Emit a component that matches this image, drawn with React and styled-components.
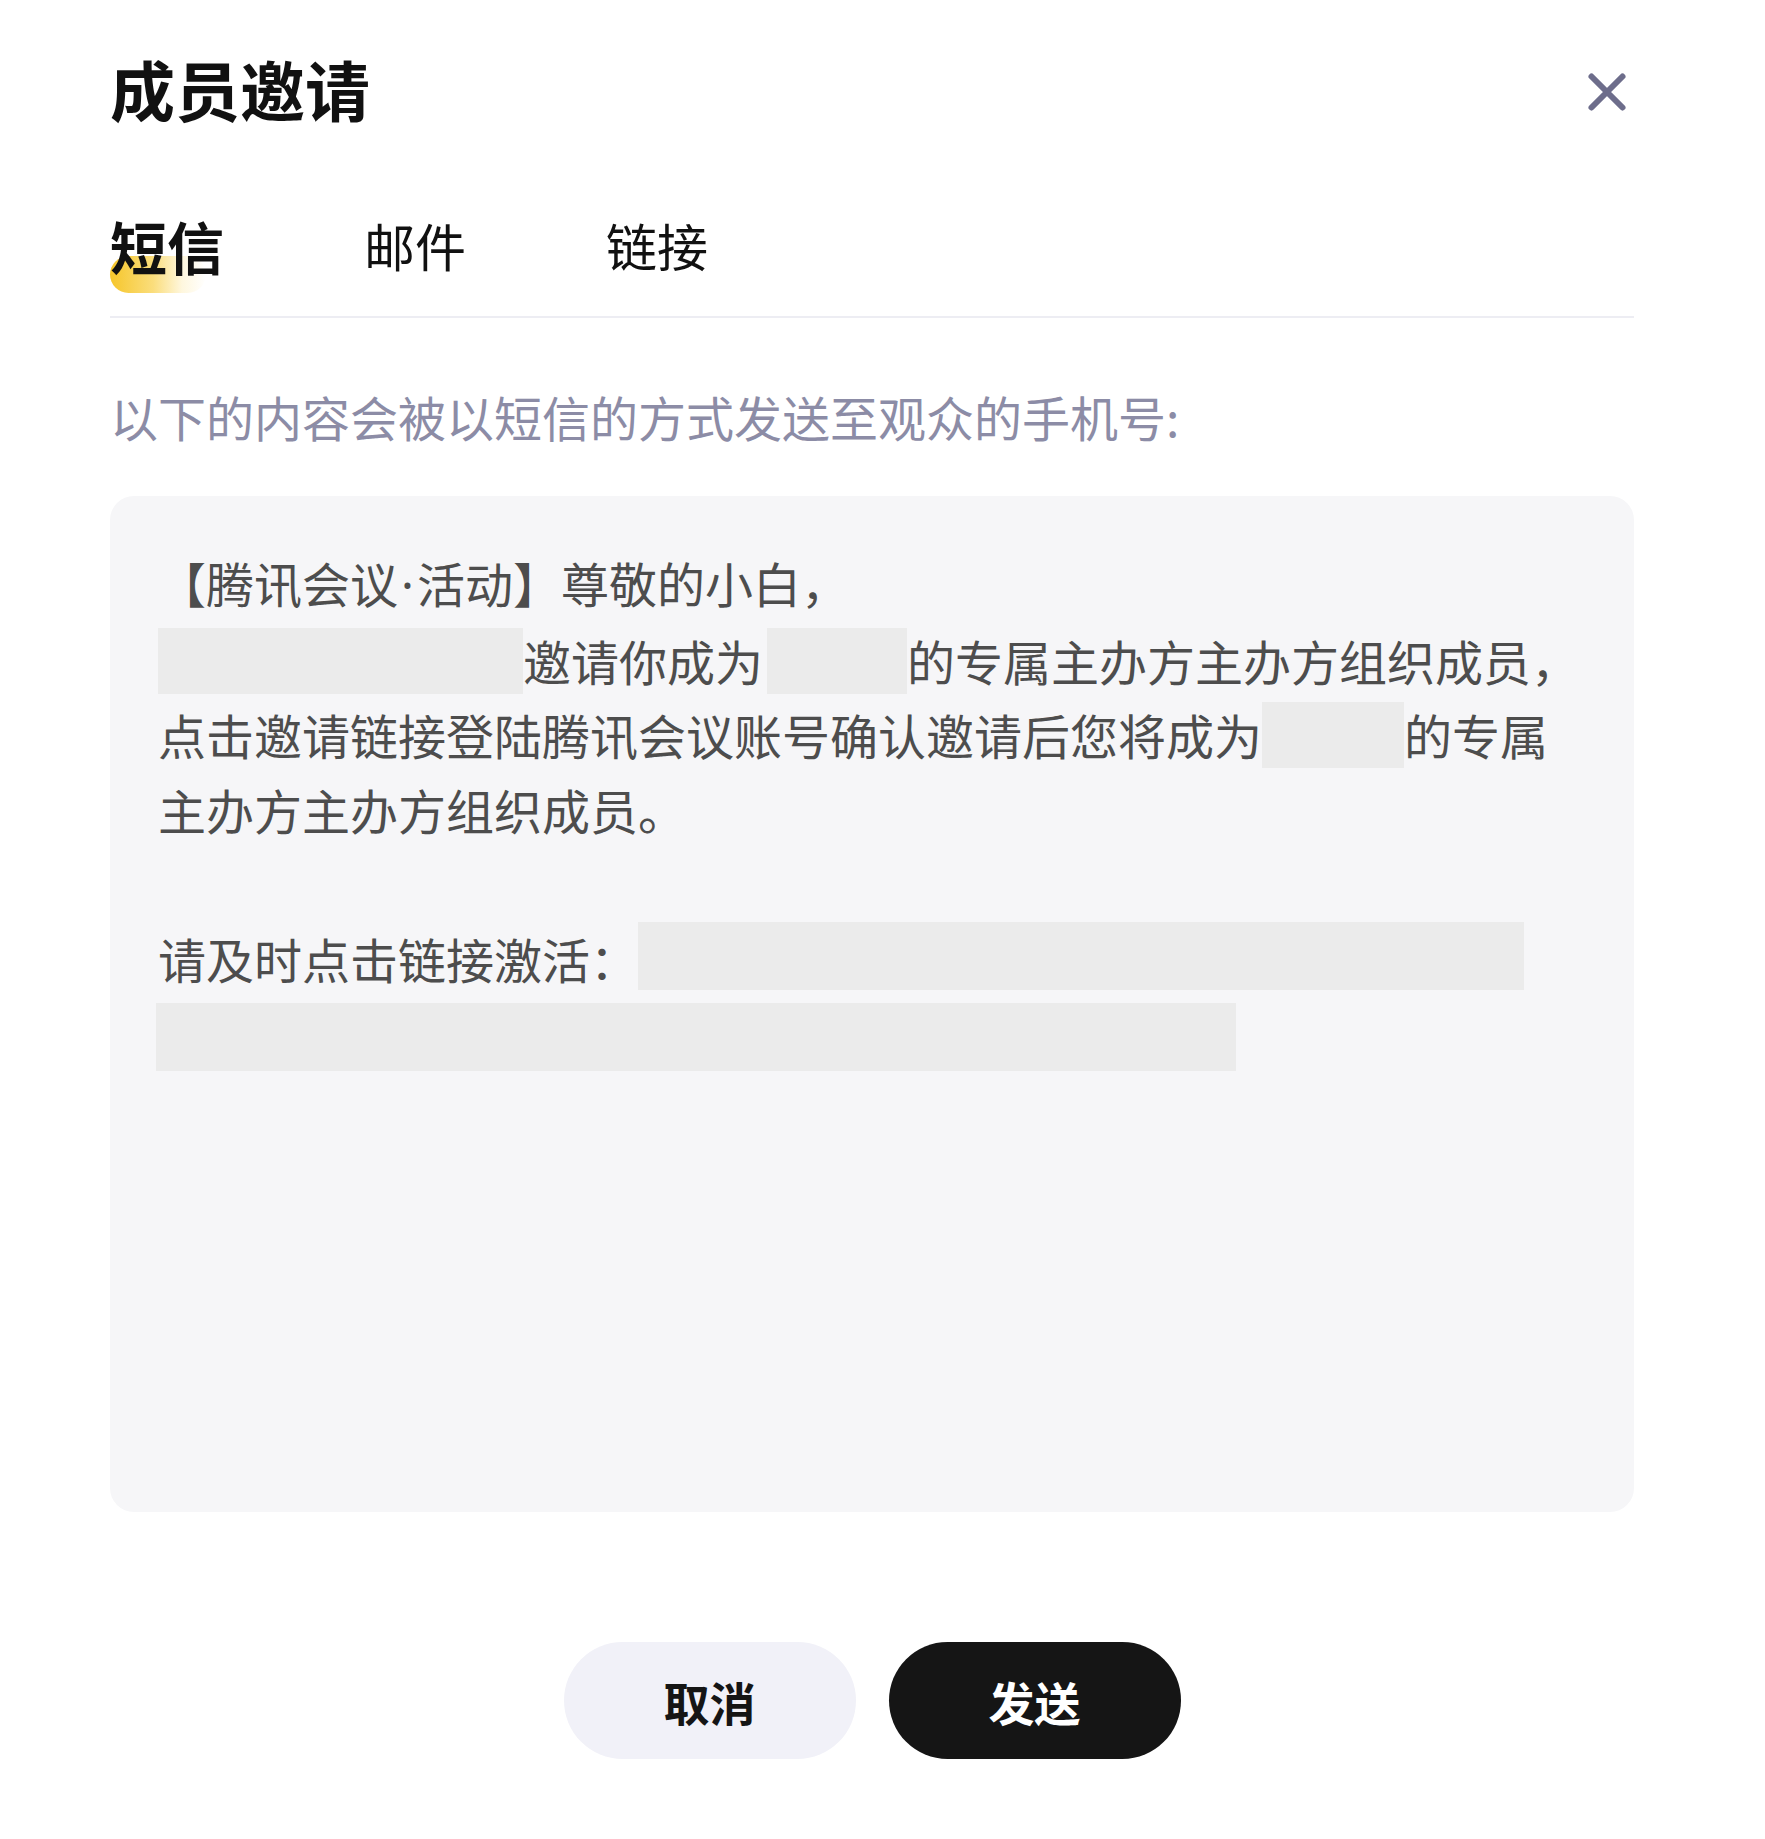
import React from "react";
import styled, { createGlobalStyle } from "styled-components";

const GlobalStyle = createGlobalStyle`
  html, body {
    margin: 0;
    padding: 0;
    background: #ffffff;
  }
  body {
    font-family: "Noto Sans CJK SC", "Noto Sans", sans-serif;
    -webkit-font-smoothing: antialiased;
  }
  * { box-sizing: border-box; }
`;

const Page = styled.div`
  width: 1765px;
  height: 1839px;
  padding: 0 131px 0 110px;
  display: flex;
  flex-direction: column;
`;

const Header = styled.div`
  display: flex;
  align-items: center;
  justify-content: space-between;
  padding-top: 46px;
  height: 134px;
`;

const Title = styled.h1`
  margin: 0 0 4px;
  font-size: 65px;
  line-height: 84px;
  font-weight: 700;
  color: #111111;
`;

const CloseButton = styled.button`
  width: 40px;
  height: 40px;
  padding: 0;
  margin: 4px 7px 0 0;
  border: none;
  background: transparent;
  display: flex;
  align-items: center;
  justify-content: center;
  cursor: pointer;
`;

const TabBar = styled.div`
  display: flex;
  align-items: flex-end;
  gap: 140px;
  margin-top: 76px;
  padding-bottom: 36px;
  border-bottom: 2px solid #ededf3;
`;

const Tab = styled.div`
  position: relative;
  height: 70px;
  line-height: 70px;
  font-size: ${(p) => (p.$active ? "57px" : "51px")};
  font-weight: ${(p) => (p.$active ? 700 : 400)};
  color: #111111;
  z-index: 0;

  &::after {
    content: "";
    display: ${(p) => (p.$active ? "block" : "none")};
    position: absolute;
    left: 0;
    top: 46px;
    width: 96px;
    height: 37px;
    border-radius: 19px;
    background: linear-gradient(
      90deg,
      #f6c62a 0%,
      rgba(249, 210, 80, 0.75) 45%,
      rgba(253, 232, 160, 0.35) 75%,
      rgba(255, 245, 210, 0) 100%
    );
    z-index: -1;
  }
`;

const Description = styled.p`
  margin: 66px 0 0;
  font-size: 48px;
  line-height: 64px;
  color: #8c8ca6;
  font-weight: 400;
`;

const MessageBox = styled.div`
  margin-top: 48px;
  height: 1016px;
  border-radius: 24px;
  background: #f6f6f8;
  padding: 49px 48px;
`;

const MessageText = styled.div`
  font-size: 48px;
  line-height: 74.5px;
  color: #4d4d4d;
  font-weight: 400;
  word-break: break-all;
`;

const Dot = styled.span`
  font-family: "Noto Sans", "DejaVu Sans", sans-serif;
  margin: 0 3px;
`;

const Masked = styled.span`
  display: inline-block;
  vertical-align: top;
  margin-top: ${(p) => p.$mt ?? 5}px;
  height: ${(p) => p.$h || 66}px;
  width: ${(p) => p.$w}px;
  margin-left: ${(p) => p.$ml || 0}px;
  margin-right: ${(p) => p.$mr || 0}px;
  background: #ebebeb;
`;

const Footer = styled.div`
  margin-top: 130px;
  display: flex;
  justify-content: center;
  gap: 33px;
`;

const Button = styled.button`
  width: 292px;
  height: 117px;
  border: none;
  border-radius: 59px;
  font-family: inherit;
  font-size: 46px;
  font-weight: 700;
  background: ${(p) => (p.$primary ? "#151515" : "#f1f1f8")};
  color: ${(p) => (p.$primary ? "#ffffff" : "#151515")};
  cursor: pointer;
`;

export default function App() {
  return (
    <>
      <GlobalStyle />
      <Page>
        <Header>
          <Title>成员邀请</Title>
          <CloseButton aria-label="关闭">
            <svg width="40" height="40" viewBox="0 0 40 40">
              <path
                d="M4.5 4.5 L35.5 35.5 M35.5 4.5 L4.5 35.5"
                stroke="#6d6d8b"
                strokeWidth="6"
                strokeLinecap="round"
                fill="none"
              />
            </svg>
          </CloseButton>
        </Header>

        <TabBar>
          <Tab $active>短信</Tab>
          <Tab>邮件</Tab>
          <Tab>链接</Tab>
        </TabBar>

        <Description>以下的内容会被以短信的方式发送至观众的手机号:</Description>

        <MessageBox>
          <MessageText>
            【腾讯会议<Dot>·</Dot>活动】尊敬的小白，
            <br />
            <Masked $w={365} />邀请你成为<Masked $w={140} $ml={4} />的专属主办方主办方组织成员，
            <br />
            点击邀请链接登陆腾讯会议账号确认邀请后您将成为<Masked $w={142} />的专属
            <br />
            主办方主办方组织成员。
            <br />
            <br />
            请及时点击链接激活：<Masked $w={886} $h={68} $mt={1} />
            <br />
            <Masked $w={1080} $h={68} $ml={-2} $mt={8} />
          </MessageText>
        </MessageBox>

        <Footer>
          <Button>取消</Button>
          <Button $primary>发送</Button>
        </Footer>
      </Page>
    </>
  );
}
